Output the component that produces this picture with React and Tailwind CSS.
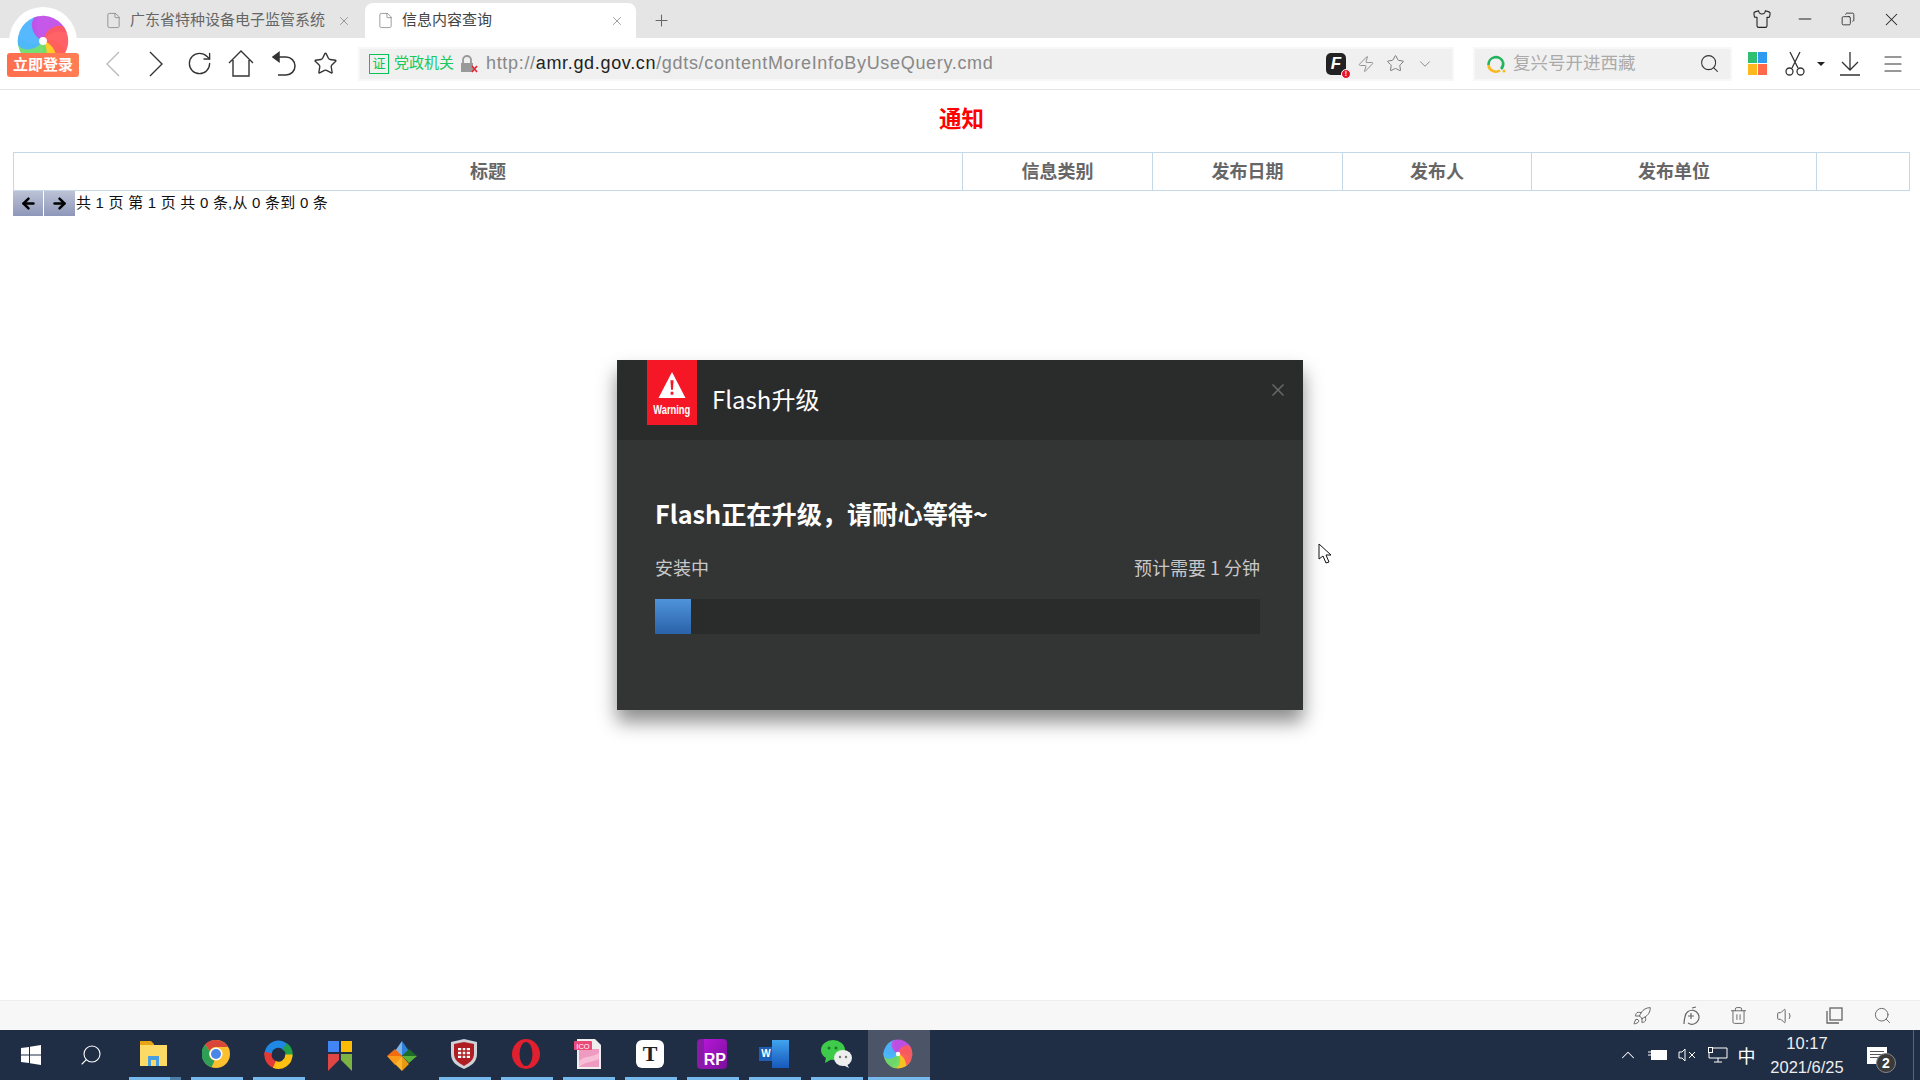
import React from "react";
import {
  RotateCw,
  Star,
  Zap,
  ChevronDown,
  Search,
  Menu,
  Shirt,
  Minus,
  Copy,
  X,
  Plus,
  File,
  Rocket,
  Trash2,
  Volume1,
  ArrowLeft,
  ArrowRight,
  ChevronUp,
} from "lucide-react";

const columns = [
  { label: "标题", width: "w-[949px]" },
  { label: "信息类别", width: "w-[190px]" },
  { label: "发布日期", width: "w-[190px]" },
  { label: "发布人", width: "w-[189px]" },
  { label: "发布单位", width: "w-[285px]" },
  { label: "", width: "w-[92px]" },
];

const Pinwheel = ({ size = 32, className = "" }) => {
  const petals = [
    { color: "#ffc81e", rotate: 118 },
    { color: "#6fdc6a", rotate: 190 },
    { color: "#4db5ff", rotate: -100 },
    { color: "#c24fe8", rotate: -20 },
    { color: "#ff5a5f", rotate: 55 },
  ];
  return (
    <svg width={size} height={size} viewBox="0 0 100 100" className={className}>
      {petals.map((p) => (
        <path
          key={p.color}
          d="M50 50 C36 36 36 14 50 5 A45 45 0 0 1 95 50 C78 40 60 40 50 50Z"
          fill={p.color}
          opacity="0.95"
          transform={`rotate(${p.rotate} 50 50)`}
        />
      ))}
      <circle cx="50" cy="50" r="7" fill="#fff" />
    </svg>
  );
};

const TallChevron = ({ dir = "left", color = "#333" }) => (
  <svg width="16" height="26" viewBox="0 0 16 26" fill="none" stroke={color} strokeWidth="1.4">
    <path d={dir === "left" ? "M14 1 L2 13 L14 25" : "M2 1 L14 13 L2 25"} />
  </svg>
);

const FolderIcon = () => (
  <svg width="28" height="28" viewBox="0 0 28 28">
    <path d="M0 1h11l3 3v3H0z" fill="#e8a317" />
    <rect x="0" y="5" width="27" height="21" fill="#fdd966" />
    <path d="M8 26v-10h11v10h-3v-6h-5v6z" fill="#4a9fe0" />
  </svg>
);

const ChromeIcon = () => (
  <svg width="28" height="28" viewBox="0 0 28 28">
    <circle cx="14" cy="14" r="14" fill="#fbc02d" />
    <path d="M14 0a14 14 0 0 1 12.1 7H14a7 7 0 0 0-6.3 4L3 4.5A14 14 0 0 1 14 0z" fill="#d9473b" />
    <path d="M3 4.5 7.700 11a7 7 0 0 0 4.800 9.800L9.500 27.300A14 14 0 0 1 3 4.500z" fill="#2f9e57" />
    <circle cx="14" cy="14" r="6.500" fill="#fff" />
    <circle cx="14" cy="14" r="5" fill="#4a86e8" />
  </svg>
);

const SwirlIcon = () => (
  <svg width="29" height="29" viewBox="0 0 28 28" fill="none" strokeWidth="7">
    <path d="M4 14A10 10 0 0 1 22 8" stroke="#1f88e5" />
    <path d="M4 12A10 10 0 0 0 12 24" stroke="#e53935" />
    <path d="M20 6A10 10 0 0 1 24 16" stroke="#22a04a" />
    <path d="M10 23.500A10 10 0 0 0 24 14" stroke="#fdc010" />
  </svg>
);

const BookmarkIcon = () => (
  <svg width="24" height="30" viewBox="0 0 24 30">
    <rect x="0" y="0" width="11" height="11" fill="#4285f4" />
    <rect x="13" y="0" width="11" height="11" fill="#fbbc05" />
    <path d="M0 13h11v6L0 30z" fill="#e04646" />
    <path d="M13 13h11v17L13 19z" fill="#7cb342" />
  </svg>
);

const PinIcon = () => (
  <svg width="30" height="30" viewBox="0 0 30 30">
    <path d="M15 0 22 10 15 15z" fill="#2f80d8" />
    <path d="M15 0 8 10 15 15z" fill="#7fb3e8" />
    <path d="M15 15 0 15 8 8z" fill="#f26b10" />
    <path d="M15 15 30 15 22 8z" fill="#1b6b2a" />
    <path d="M15 15 8 24 0 15z" fill="#fb9b1c" />
    <path d="M15 15 22 22 30 15z" fill="#58b13a" />
    <path d="M15 15 8 23 15 30z" fill="#ffb52e" />
    <path d="M15 15 22 23 15 30z" fill="#e89a10" />
  </svg>
);

const ShieldIcon = () => (
  <svg width="26" height="30" viewBox="0 0 26 30">
    <path d="M13 0 26 3v12c0 8-6 12-13 15C6 27 0 23 0 15V3z" fill="#cfd2d6" />
    <path d="M13 3 23 5v10c0 6-5 9-10 12C8 24 3 21 3 15V5z" fill="#b01e23" />
    <path d="M7 9h12v10H7z" fill="#fff" />
    <path d="M7 12h12M7 16h12M11 9v10M15 9v10" stroke="#b01e23" strokeWidth="1.500" />
  </svg>
);

const OperaIcon = () => (
  <svg width="28" height="30" viewBox="0 0 28 30">
    <ellipse cx="14" cy="15" rx="14" ry="15" fill="#e0202e" />
    <ellipse cx="14" cy="15" rx="6.500" ry="12" fill="#1f2d45" />
  </svg>
);

const IcoFileIcon = () => (
  <svg width="28" height="30" viewBox="0 0 28 30">
    <path d="M3 0h18l6 6v24H3z" fill="#eeeeee" />
    <rect x="5" y="10" width="20" height="18" fill="#ef9ac0" />
    <path d="M5 22c6-6 12-3 20-8v6c-8 4-13 2-20 8z" fill="#f7bdd6" />
    <rect x="0" y="2" width="18" height="9" rx="1" fill="#ec4a78" />
    <text x="9" y="9.500" fontSize="7.500" fill="#fff" textAnchor="middle" fontFamily="Liberation Sans">ICO</text>
  </svg>
);

const RpIcon = () => (
  <div className="w-[30px] h-[30px] rounded-sm bg-gradient-to-br from-[#b617d8] to-[#7a0f9a] flex items-end justify-end border-l-[7px] border-[#8a1aa8]">
    <span className="text-white text-[16px] font-bold leading-[18px] pr-[1px]">RP</span>
  </div>
);

const WordIcon = () => (
  <div className="flex items-center">
    <div className="w-[14px] h-[14px] bg-[#1d5fb8] text-white text-[10px] font-bold leading-[14px] text-center -mr-[1px]">W</div>
    <div className="w-[17px] h-[28px] bg-gradient-to-b from-[#41a5ee] via-[#2b7cd3] to-[#185abd]"></div>
  </div>
);

const WechatIcon = () => (
  <svg width="31" height="28" viewBox="0 0 31 28">
    <ellipse cx="12" cy="10" rx="12" ry="10" fill="#3ecb4a" />
    <path d="M5 17 4 23l7-4z" fill="#3ecb4a" />
    <circle cx="8" cy="8" r="1.500" fill="#1b7a2a" />
    <circle cx="15" cy="8" r="1.500" fill="#1b7a2a" />
    <ellipse cx="22" cy="18" rx="9" ry="8" fill="#eeeeee" />
    <path d="M26 24l2 4-6-3z" fill="#eeeeee" />
    <circle cx="19" cy="17" r="1.200" fill="#777" />
    <circle cx="25" cy="17" r="1.200" fill="#777" />
  </svg>
);

const taskItems = [
  { key: "folder", icon: <FolderIcon />, line: true, stacked: true },
  { key: "chrome", icon: <ChromeIcon />, line: true },
  { key: "swirl", icon: <SwirlIcon />, line: true },
  { key: "bookmark", icon: <BookmarkIcon /> },
  { key: "pin", icon: <PinIcon /> },
  { key: "shield", icon: <ShieldIcon />, line: true },
  { key: "opera", icon: <OperaIcon />, line: true },
  { key: "ico", icon: <IcoFileIcon />, line: true },
  {
    key: "typora",
    icon: (
      <div className="w-[28px] h-[28px] rounded-md bg-white text-[#222] text-[22px] font-bold leading-[28px] text-center font-['Liberation_Serif',serif]">
        T
      </div>
    ),
    line: true,
  },
  { key: "rp", icon: <RpIcon />, line: true },
  { key: "word", icon: <WordIcon />, line: true },
  { key: "wechat", icon: <WechatIcon />, line: true },
  { key: "browser", icon: <Pinwheel size={32} />, line: true, active: true },
];

const TabStrip = () => (
  <div className="h-[38px] bg-[#e5e5e5] flex items-end pl-[105px] text-[15px] shrink-0">
    <div className="h-[35px] w-[260px] flex items-center text-[#666]">
      <File size={17} strokeWidth={1} className="text-[#777]" />
      <span className="ml-[8px] whitespace-nowrap">广东省特种设备电子监管系统</span>
      <X size={14} strokeWidth={1.2} className="ml-[12px] text-[#777]" />
    </div>
    <div className="h-[35px] w-[271px] bg-white rounded-t-lg flex items-center pl-[11px] text-[#444]">
      <File size={17} strokeWidth={1} className="text-[#777] ml-[1px]" />
      <span className="ml-[8px]">信息内容查询</span>
      <X size={14} strokeWidth={1.2} className="ml-[118px] text-[#777]" />
    </div>
    <div className="h-[35px] w-[50px] flex items-center justify-center text-[#666]">
      <Plus size={19} strokeWidth={1.3} />
    </div>
    <div className="flex-1"></div>
    <div className="h-[38px] flex items-center text-[#222] pr-[8px]">
      <div className="w-[44px] flex justify-center">
        <Shirt size={20} strokeWidth={1.3} />
      </div>
      <div className="w-[42px] flex justify-center">
        <Minus size={20} strokeWidth={1.2} />
      </div>
      <div className="w-[44px] flex justify-center">
        <Copy size={14} strokeWidth={1.4} className="-scale-x-100" />
      </div>
      <div className="w-[42px] flex justify-center">
        <X size={21} strokeWidth={1.2} />
      </div>
    </div>
  </div>
);

const Toolbar = () => (
  <div className="h-[52px] bg-white border-b border-[#e4e4e4] flex items-center shrink-0 text-[#333]">
    <div className="w-[92px] shrink-0"></div>
    <div className="flex items-center w-[266px] shrink-0">
      <div className="w-[42px] flex justify-center">
        <TallChevron dir="left" color="#bbb" />
      </div>
      <div className="w-[44px] flex justify-center">
        <TallChevron dir="right" />
      </div>
      <div className="w-[42px] flex justify-center">
        <RotateCw size={27} strokeWidth={1.2} />
      </div>
      <div className="w-[42px] flex justify-center">
        <svg width="26" height="27" viewBox="0 0 26 27" fill="none" stroke="currentColor" strokeWidth="1.4">
          <path d="M1 13 13 1l12 12M5 10v16h16V10" />
        </svg>
      </div>
      <div className="w-[43px] flex justify-center">
        <svg width="24" height="26" viewBox="0 0 24 26" fill="none" stroke="currentColor" strokeWidth="1.5">
          <path d="M6 6h8a9 9 0 0 1 0 18H6" />
          <path d="M7 1.500 1 6l6 4.500z" fill="currentColor" />
        </svg>
      </div>
      <div className="w-[41px] flex justify-center">
        <Star size={25} strokeWidth={1.3} />
      </div>
    </div>
    <div className="w-[1096px] shrink-0 h-[34px] bg-[#f0f0f0] border-2 border-[#f7f7f7] flex items-center pl-[9px]">
      <div className="w-[20px] h-[20px] border border-[#00c853] text-[#00c853] text-[13px] leading-[18px] text-center">证</div>
      <span className="ml-[5px] text-[15px] text-[#19c95a] whitespace-nowrap">党政机关</span>
      <svg width="20" height="20" viewBox="0 0 20 20" className="ml-[5px]">
        <path d="M4 9V6a4 4 0 0 1 8 0v3" fill="none" stroke="#999" strokeWidth="1.800" />
        <rect x="2" y="9" width="12" height="9" fill="#999" />
        <path d="M13 12l5 6M18 12l-5 6" stroke="#e8212f" strokeWidth="1.600" />
      </svg>
      <span className="ml-[7px] text-[18px] tracking-[0.67px] text-[#888] whitespace-nowrap">
        http://<span className="text-[#222]">amr.gd.gov.cn</span>/gdts/contentMoreInfoByUseQuery.cmd
      </span>
      <div className="flex-1"></div>
      <div className="relative w-[20px] h-[22px] rounded-[5px] bg-[#222] text-white text-[17px] font-bold italic leading-[22px] text-center">
        F
        <span className="absolute -right-[5px] -bottom-[4px] w-[10px] h-[10px] rounded-full bg-[#e8112d] border border-white text-[7px] leading-[8px] not-italic">!</span>
      </div>
      <div className="w-[36px] flex justify-center ml-[2px] text-[#888]">
        <Zap size={18} strokeWidth={1.2} />
      </div>
      <div className="w-[22px] flex justify-center text-[#777]">
        <Star size={19} strokeWidth={1.2} />
      </div>
      <div className="w-[38px] flex justify-center text-[#777]">
        <ChevronDown size={18} strokeWidth={1.1} />
      </div>
      <div className="w-[8px]"></div>
    </div>
    <div className="w-[19px] shrink-0"></div>
    <div className="w-[259px] shrink-0 h-[34px] bg-[#f0f0f0] border-2 border-[#f7f7f7] flex items-center pl-[11px]">
      <svg width="20" height="20" viewBox="0 0 20 20" fill="none" strokeWidth="2.600">
        <path d="M2.500 11A7.500 7.500 0 0 1 17 8" stroke="#22b35e" />
        <path d="M17 8A7.500 7.500 0 0 1 15 15" stroke="#22b35e" />
        <path d="M2.500 11A7.500 7.500 0 0 0 14 16.500" stroke="#f8b81e" />
        <circle cx="18" cy="17" r="1.500" fill="#f8b81e" stroke="none" />
      </svg>
      <span className="ml-[7px] text-[17.5px] text-[#aaa] whitespace-nowrap">复兴号开进西藏</span>
      <div className="flex-1"></div>
      <Search size={21} strokeWidth={1.2} className="mr-[10px] text-[#333]" />
    </div>
    <div className="flex items-center">
      <div className="w-[51px] flex justify-center">
        <div className="grid grid-cols-2 gap-[1px] w-[19px] h-[23px]">
          <div className="bg-[#2fbf71]"></div>
          <div className="bg-[#2f9bf0]"></div>
          <div className="bg-[#fdb81e]"></div>
          <div className="bg-[#ff6b4a]"></div>
        </div>
      </div>
      <div className="w-[24px] flex justify-center">
        <svg width="20" height="25" viewBox="0 0 20 25" fill="none" stroke="currentColor" strokeWidth="1.300">
          <path d="M5 1 13 17M15 1 7 17" />
          <circle cx="4.500" cy="20.500" r="3.500" />
          <circle cx="15.500" cy="20.500" r="3.500" />
        </svg>
      </div>
      <div className="w-0 h-0 ml-[10px] border-x-[4px] border-t-[4px] border-x-transparent border-t-[#222]"></div>
      <svg width="22" height="26" viewBox="0 0 22 26" fill="none" stroke="#333" strokeWidth="1.300" className="ml-[14px]">
        <path d="M11 1v18M3 11l8 8 8-8M1 24h20" />
      </svg>
      <div className="w-[59px] pl-[20px] flex justify-start">
        <Menu size={24} strokeWidth={1.2} />
      </div>
    </div>
  </div>
);

const PageContent = () => (
  <div className="flex-1 bg-white px-[13px]">
    <div className="h-[62px] flex items-center justify-center text-[22.5px] font-bold text-[#ff0000] pb-[2px] pl-[3px]">
      通知
    </div>
    <div className="flex w-[1897px] h-[39px] border border-[#c5d8e8]">
      {columns.map((col) => (
        <div
          key={col.label || "empty"}
          className={`${col.width} flex items-center justify-center border-r border-[#c5d8e8] last:border-r-0 pt-[2px] text-[18px] font-bold text-[#666]`}
        >
          {col.label}
        </div>
      ))}
    </div>
    <div className="flex items-center h-[25px]">
      <div className="w-[31px] h-[25px] bg-gradient-to-b from-[#bcc3d6] to-[#8f97ba] border-r border-white flex items-center justify-center">
        <ArrowLeft size={17} strokeWidth={3.5} className="text-black" />
      </div>
      <div className="w-[31px] h-[25px] bg-gradient-to-b from-[#bcc3d6] to-[#8f97ba] flex items-center justify-center">
        <ArrowRight size={17} strokeWidth={3.5} className="text-black" />
      </div>
      <span className="ml-[1px] text-[15px] tracking-[0.22px] text-[#111] whitespace-nowrap">共 1 页 第 1 页 共 0 条,从 0 条到 0 条</span>
    </div>
  </div>
);

const StatusStrip = () => (
  <div className="h-[30px] bg-[#f7f7f7] border-t border-[#eeeeee] flex items-center justify-end pr-[14px] text-[#666] shrink-0">
    <div className="w-[48px] flex justify-center">
      <Rocket size={20} strokeWidth={1.2} />
    </div>
    <div className="w-[48px] flex justify-center">
      <svg width="19" height="19" viewBox="0 0 19 19" fill="none" stroke="currentColor" strokeWidth="1.200">
        <path d="M3 18c0-3 0-4 1-7a7 7 0 1 1 3 6M7 10h6M10 7v6M11 2l4-1" />
      </svg>
    </div>
    <div className="w-[48px] flex justify-center">
      <Trash2 size={19} strokeWidth={1.2} />
    </div>
    <div className="w-[48px] flex justify-center">
      <Volume1 size={20} strokeWidth={1.2} />
    </div>
    <div className="w-[48px] flex justify-center">
      <svg width="17" height="17" viewBox="0 0 17 17" fill="none" stroke="currentColor" strokeWidth="1.300">
        <rect x="4" y="1" width="12" height="12" />
        <path d="M1 4v12h12" />
      </svg>
    </div>
    <div className="w-[48px] flex justify-center">
      <Search size={19} strokeWidth={1.2} />
    </div>
  </div>
);

const Taskbar = () => (
  <div className="h-[50px] bg-[#1f2d45] flex items-stretch shrink-0 text-white">
    <div className="w-[62px] flex items-center justify-center">
      <svg width="20" height="20" viewBox="0 0 20 20" fill="#fff">
        <path d="M0 3l8-1v7.500H0zM9 1.800 20 0v9.500H9zM0 10.500h8V18l-8-1zM9 10.500h11V20L9 18.200z" />
      </svg>
    </div>
    <div className="w-[62px] flex items-center justify-center pr-[4px]">
      <Search size={24} strokeWidth={1.1} className="-scale-x-100" />
    </div>
    {taskItems.map((item) => (
      <div key={item.key} className={`w-[62px] flex flex-col ${item.active ? "bg-[#4b5567]" : ""}`}>
        <div className="flex-1 flex items-center justify-center pr-[2px] pt-[1px]">{item.icon}</div>
        {item.line && (
          <div className={`h-[3px] flex ${item.active ? "" : "mx-[5px]"} bg-[#76b9ed]`}>
            {item.stacked && <div className="ml-auto w-[11px] bg-[#4d7ea8]"></div>}
          </div>
        )}
      </div>
    ))}
    <div className="flex-1"></div>
    <div className="flex items-center pr-[6px]">
      <div className="w-[30px] flex justify-center">
        <ChevronUp size={22} strokeWidth={1.1} />
      </div>
      <div className="w-[30px] flex justify-center">
        <svg width="20" height="12" viewBox="0 0 20 12">
          <path d="M0 3h3M0 6h3" stroke="#fff" />
          <rect x="3.500" y="1.500" width="15" height="9" fill="#fff" stroke="#fff" />
        </svg>
      </div>
      <div className="w-[29px] flex justify-center">
        <svg width="20" height="14" viewBox="0 0 20 14" fill="none" stroke="#fff" strokeWidth="1">
          <path d="M1 4h3l3-3v12L4 10H1zM11 4l6 6M17 4l-6 6" />
        </svg>
      </div>
      <div className="w-[31px] flex justify-center">
        <svg width="20" height="16" viewBox="0 0 20 16" fill="none" stroke="#fff" strokeWidth="1">
          <path d="M5 1h14v10H1V6M10 11v4M6 15h8" />
          <rect x="0.500" y="0.500" width="4" height="5" />
        </svg>
      </div>
      <div className="w-[27px] text-center text-[18px] font-['Noto_Sans_CJK_SC',sans-serif]">中</div>
      <div className="w-[94px] text-center text-[16.5px] leading-[24px] text-[#eeeeee]">
        <div>10:17</div>
        <div>2021/6/25</div>
      </div>
      <div className="w-[52px] flex justify-center">
        <div className="relative w-[20px] h-[17px] bg-white mr-[6px]">
          <div className="h-[1px] bg-[#555] mx-[3px] mt-[4px]"></div>
          <div className="h-[1px] bg-[#555] mx-[3px] mt-[2px]"></div>
          <div className="h-[1px] bg-[#555] mx-[3px] mt-[2px]"></div>
          <div className="absolute -right-[9px] -bottom-[9px] w-[20px] h-[20px] rounded-full bg-[#3a3a3a] border border-[#888] text-[14px] font-bold leading-[18px] text-center text-white">2</div>
        </div>
      </div>
      <div className="h-[50px] w-[8px] border-r border-[#5a6475]"></div>
    </div>
  </div>
);

const FlashDialog = () => (
  <div className="absolute left-[617px] top-[360px] w-[686px] h-[350px] bg-[#333434] shadow-[0_12px_18px_rgba(0,0,0,0.45)] font-['Noto_Sans_CJK_SC',sans-serif]">
    <div className="relative h-[80px] bg-[#2a2b2b] flex items-start pl-[30px]">
      <div className="w-[50px] h-[65px] bg-[#f61726] flex flex-col items-center pt-[12px]">
        <svg width="28" height="27" viewBox="0 0 26 26">
          <path d="M13 0 26 25H0z" fill="#fff" />
          <path d="M11.500 8h3l-.6 9h-1.800zM11.700 19h2.600v3h-2.600z" fill="#f61726" />
        </svg>
        <span className="text-[13px] leading-[13px] mt-[4px] font-bold text-white scale-x-[0.72] font-['Liberation_Sans',sans-serif]">Warning</span>
      </div>
      <div className="ml-[15px] h-[78px] flex items-center text-[24px] text-white">Flash升级</div>
      <X size={20} strokeWidth={2} className="absolute right-[15px] top-[20px] text-[#666]" />
    </div>
    <div className="pl-[38px] pr-[43px] pt-[53px]">
      <div className="text-[25.2px] leading-[40px] font-bold text-white whitespace-nowrap">Flash正在升级，请耐心等待~</div>
      <div className="flex justify-between mt-[20px] text-[18px] leading-[28px] text-[#c8c8c8]">
        <span>安装中</span>
        <span>预计需要 1 分钟</span>
      </div>
      <div className="mt-[18px] h-[35px] bg-[#2a2b2b]">
        <div className="w-[36px] h-[35px] bg-gradient-to-b from-[#4f94dc] to-[#2a62a8]"></div>
      </div>
    </div>
  </div>
);

const App = () => {
  return (
    <div className="relative w-[1920px] h-[1080px] overflow-hidden flex flex-col bg-white font-['Liberation_Sans','Noto_Sans_CJK_SC',sans-serif]">
      <TabStrip />
      <Toolbar />
      <PageContent />
      <StatusStrip />
      <Taskbar />

      {/* logo hangs over the tab strip and toolbar */}
      <div className="absolute left-[9px] top-[7px] w-[68px] h-[68px] rounded-full bg-white flex items-center justify-center">
        <Pinwheel size={56} />
      </div>
      <div className="absolute left-[7px] top-[53px] w-[72px] h-[24px] rounded-[3px] bg-gradient-to-r from-[#ff6f4d] to-[#ff7d55] text-white text-[15px] font-bold leading-[24px] text-center">
        立即登录
      </div>

      <FlashDialog />

      <svg width="14" height="21" viewBox="0 0 14 21" className="absolute left-[1318px] top-[543px]">
        <path d="M1 1v15l4-3 3 7 3-1-3-7h5z" fill="#fff" stroke="#111" strokeWidth="1" />
      </svg>
    </div>
  );
};

export default App;
